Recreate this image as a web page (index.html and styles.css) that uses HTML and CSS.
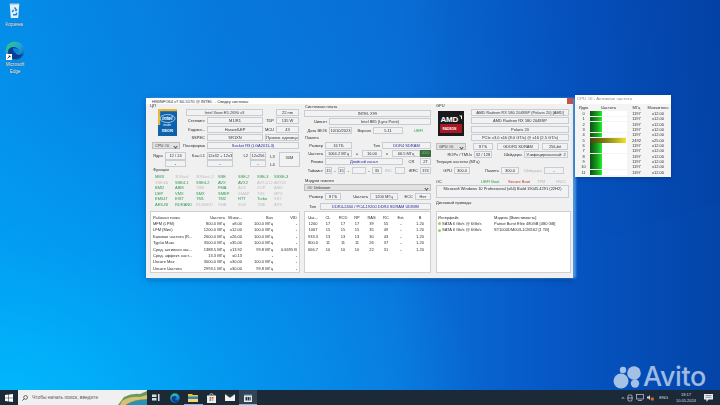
FILE: index.html
```html
<!DOCTYPE html>
<html lang="ru">
<head>
<meta charset="utf-8">
<title>HWiNFO64</title>
<link rel="stylesheet" href="styles.css">
</head>
<body>
<div class="desktop">
  <div class="dicon dicon-bin">
    <svg width="11" height="15" viewBox="0 0 11 15"><path d="M.8 2 L10.2 2 L9.2 15 L1.8 15 Z" fill="#e4eff8"/><path d="M.4 2 L10.6 2 L10 .5 L1 .5 Z" fill="#c4d2de"/><path d="M5.5 4.5 L7.5 7 L6.3 7.8 M3.2 9 L4.6 6.8 M4 11.8 L7.2 11.8 L7.8 9.8" fill="none" stroke="#1f7fd8" stroke-width="1.4"/></svg>
    <span>Корзина</span>
  </div>
  <div class="dicon dicon-edge">
    <svg width="20" height="20" viewBox="0 0 20 20"><defs><linearGradient id="eg" x1="0" y1="0" x2="1" y2="1"><stop offset="0" stop-color="#38d07a"/><stop offset=".55" stop-color="#1c9fd8"/><stop offset="1" stop-color="#0b4fa8"/></linearGradient></defs><circle cx="10" cy="10" r="9.5" fill="url(#eg)"/><path d="M3 11 C3 6 9 5 12 7 C15 9 13 12 10 11.5 C12 15 17 14 18 12 C17 17 12 19 8 18 C5 17 3 14 3 11 Z" fill="#0a3f94"/><path d="M8 7.5 C11 6.5 14 8 14 10 C14 12 11 12.5 10 11.5 C8.5 10.5 8 9 8 7.5 Z" fill="#0a84e0"/><rect x="1" y="13" width="6" height="6" fill="#fff"/><path d="M2.5 17.5 L5 15 M3.5 15 L5 15 L5 16.5" stroke="#123" stroke-width=".8" fill="none"/></svg>
    <span>Microsoft Edge</span>
  </div>

  <section class="win win-main">
    <header class="tb">HWiNFO64 v7.60-5170 @ INTEL  - Сводку системы<b class="close"></b></header>
    <div class="body">
      <div class="col col1">
        <div class="top">
          <div class="lb h4">ЦП</div>
          <div class="block mt1">
            <div class="logo-cpu">
              <svg width="19" height="27" viewBox="0 0 19 27"><rect width="19" height="27" fill="#0b62ad"/><path d="M0 0 H19 V2.2 H2.2 V16 H0 Z" fill="#e8b83a"/><ellipse cx="9.5" cy="9.5" rx="7.5" ry="4" fill="none" stroke="#fff" stroke-width=".6"/><text x="4" y="11" class="lg1">intel</text><text x="5" y="17" class="lg2">inside</text><text x="3.5" y="22.5" class="lg3">XEON</text></svg>
            </div>
            <div class="fields">
              <div class="row"><div class="f w77">Intel Xeon E5-2690 v3</div><div class="gap13"></div><div class="f w23">22 nm</div></div>
              <div class="row"><div class="lb r w21">Степпинг</div><div class="f w56">M1/R1</div><div class="lb r w13">TDP</div><div class="f w23">135 W</div></div>
              <div class="row"><div class="lb r w21">Кодово...</div><div class="f w56">Haswell-EP</div><div class="lb r w13">MCU</div><div class="f w23">43</div></div>
              <div class="row"><div class="lb r w21">SSPEC</div><div class="f w56">SR1XN</div><div class="gap2"></div><div class="f w34">Произв. единица</div></div>
            </div>
          </div>
          <div class="row mt1 ml2">
            <div class="combo w28">CPU #0</div>
            <div class="lb r w27">Платформа</div>
            <div class="f w92 blue">Socket R3 (LGA2011-3)</div>
          </div>
          <div class="row mt3 tall">
            <div class="lb w15 pl3">Ядра</div>
            <div class="stack w21"><div class="f">12 / 24</div><div class="f">-</div></div>
            <div class="lb r w21">Кэш L1</div>
            <div class="stack w26"><div class="f">12x32 + 12x32</div><div class="f">-</div></div>
            <div class="lb r w17">L2</div>
            <div class="stack w16"><div class="f">12x256</div><div class="f">-</div></div>
            <div class="stack2 w13"><span>L3</span><span>L4</span></div>
            <div class="stack w21"><div class="f full">30M</div></div>
          </div>
          <div class="lb h4 mt1 pl3 sec">Функции</div>
          <div class="feat">
            <i class="on">MMX</i><i>3DNow!</i><i>3DNow!-2</i><i class="on">SSE</i><i class="on">SSE-2</i><i class="on">SSE-3</i><i class="on">SSSE-3</i>
            <i>SSE4A</i><i class="on">SSE4.1</i><i class="on">SSE4.2</i><i class="on">AVX</i><i class="on">AVX2</i><i>AVX-512</i><i>AVX10</i>
            <i class="on">BMI2</i><i class="on">ABM</i><i>TBM</i><i class="on">FMA</i><i>ADX</i><i>XOP</i><i>AMX</i>
            <i class="on">DEP</i><i class="on">VMX</i><i class="on">SMX</i><i class="on">SMEP</i><i>SMAP</i><i>TSX</i><i>MPX</i>
            <i class="on">EM64T</i><i class="on">EIST</i><i class="on">TM1</i><i class="on">TM2</i><i class="on">HTT</i><i class="on">Turbo</i><i>SST</i>
            <i class="on">AES-NI</i><i class="on">RDRAND</i><i>RDSEED</i><i>SHA</i><i>SGX</i><i>TME</i><i>APX</i>
          </div>
        </div>
        <div class="list t1">
          <b>Рабочая точка</b><b class="e">Частота</b><b class="e">Множ...</b><b class="e">Bus</b><b class="e">VID</b>
          <span>MFM (LPM)</span><span class="e">800.0 МГц</span><span class="e">x8.00</span><span class="e">100.0 МГц</span><span class="e">-</span>
          <span>LFM (Мин)</span><span class="e">1200.0 МГц</span><span class="e">x12.00</span><span class="e">100.0 МГц</span><span class="e">-</span>
          <span>Базовая частота (R...</span><span class="e">2600.0 МГц</span><span class="e">x26.00</span><span class="e">100.0 МГц</span><span class="e">-</span>
          <span>Турбо Макс</span><span class="e">3500.0 МГц</span><span class="e">x35.00</span><span class="e">100.0 МГц</span><span class="e">-</span>
          <span>Сред. активная час...</span><span class="e">1388.5 МГц</span><span class="e">x13.92</span><span class="e">99.8 МГц</span><span class="e">0.6695 В</span>
          <span>Сред. эффект. част...</span><span class="e">13.3 МГц</span><span class="e">x0.13</span><span class="e">-</span><span class="e">-</span>
          <span>Uncore Max</span><span class="e">3000.0 МГц</span><span class="e">x30.00</span><span class="e">100.0 МГц</span><span class="e">-</span>
          <span>Uncore Частота</span><span class="e">2993.1 МГц</span><span class="e">x30.00</span><span class="e">99.8 МГц</span><span class="e">-</span>
        </div>
      </div>

      <div class="col col2">
        <div class="top">
          <div class="lb h4 mt1 pl1">Системная плата</div>
          <div class="f mt1 h7">INTEL X99</div>
          <div class="row mt1"><div class="lb r w25">Чипсет</div><div class="f grow">Intel B85 (Lynx Point)</div></div>
          <div class="row mt2"><div class="lb r w25">Дата BIOS</div><div class="f w23">10/10/2023</div><div class="lb r w21">Версия</div><div class="f w30">5.11</div><div class="lb uefi">UEFI</div></div>
          <div class="lb h4 mt2 pl1">Память</div>
          <div class="row mt2"><div class="lb r w21">Размер</div><div class="f w27">16 ГБ</div><div class="lb r w30">Тип</div><div class="f grow blue">DDR4 SDRAM</div></div>
          <div class="row mt1"><div class="lb r w21">Частота</div><div class="f w27">1064.2 МГц</div><div class="lb c w10">=</div><div class="f w20">16.00</div><div class="lb c w10">x</div><div class="f w28">66.5 МГц</div><div class="led">0000</div></div>
          <div class="row mt1"><div class="lb r w21">Режим</div><div class="f w78 blue">Двойной канал</div><div class="lb c w17">CR</div><div class="f grow">2T</div></div>
          <div class="row mt2"><div class="lb r w21">Тайминг</div><div class="f w7">15</div><div class="lb c w6">-</div><div class="f w7">15</div><div class="lb c w7">-</div><div class="f w14"></div><div class="lb c w6">-</div><div class="f w10">35</div><div class="lb c dim w13">tRC</div><div class="f w10"></div><div class="lb r w15">tRFC</div><div class="f grow">374</div></div>
          <div class="lb h4 mt5 pl1">Модули памяти</div>
          <div class="combo full-w mt1">#0: Unknown</div>
          <div class="row mt2"><div class="lb r w21">Размер</div><div class="f w16">8 ГБ</div><div class="lb r w29">Частота</div><div class="f w28">1200 МГц</div><div class="lb r w17">ECC</div><div class="f grow">Нет</div></div>
          <div class="row mt3"><div class="lb r w14">Тип</div><div class="gap2"></div><div class="f grow blue">DDR4-2400 / PC4-19200 DDR4 SDRAM UDIMM</div></div>
        </div>
        <div class="list t2">
          <b>Час...</b><b>CL</b><b>RCD</b><b>RP</b><b>RAS</b><b>RC</b><b>Ext.</b><b>В</b>
          <span>1200</span><span>17</span><span>17</span><span>17</span><span>39</span><span>55</span><span>-</span><span>1.20</span>
          <span>1067</span><span>15</span><span>15</span><span>15</span><span>35</span><span>49</span><span>-</span><span>1.20</span>
          <span>933.3</span><span>13</span><span>13</span><span>13</span><span>30</span><span>43</span><span>-</span><span>1.20</span>
          <span>800.0</span><span>11</span><span>11</span><span>11</span><span>26</span><span>37</span><span>-</span><span>1.20</span>
          <span>666.7</span><span>10</span><span>10</span><span>10</span><span>22</span><span>31</span><span>-</span><span>1.20</span>
        </div>
      </div>

      <div class="col col3">
        <div class="top">
          <div class="lb h4">GPU</div>
          <div class="block mt1">
            <div class="logo-gpu">
              <svg width="26" height="25" viewBox="0 0 26 25"><rect width="26" height="25" fill="#1a1a1c"/><text x="2.5" y="10.5" class="am">AMD</text><path d="M21 4.5 H24 V8.5 L23 7.5 V5.5 H22 Z" fill="#fff"/><rect x="2" y="13" width="22" height="9" fill="#a81826"/><text x="4.5" y="18.5" class="rad">RADEON</text></svg>
            </div>
            <div class="fields g">
              <div class="f">AMD Radeon RX 580 2048SP (Polaris 20) [AMD]</div>
              <div class="f">AMD Radeon RX 580 2048SP</div>
              <div class="f">Polaris 20</div>
              <div class="f">PCIe v3.0 x16 (8.0 GT/s) @ x16 (2.5 GT/s)</div>
            </div>
          </div>
          <div class="row mt2">
            <div class="combo w30">GPU #0</div><div class="gap7"></div><div class="f w20">8 ГБ</div><div class="gap4"></div><div class="f w42">GDDR5 SDRAM</div><div class="gap3"></div><div class="f w26">256-bit</div>
          </div>
          <div class="row mt1"><div class="lb r w38">ROPs / TMUs</div><div class="f w18">32 / 128</div><div class="lb r w32">Шейдеры</div><div class="f w44">Унифицированный: 2</div></div>
          <div class="lb h4 mt2 sec">Текущие частоты (МГц)</div>
          <div class="row mt3"><div class="lb r w18">GPU</div><div class="f w16">300.0</div><div class="lb r w31">Память</div><div class="f w18">300.0</div><div class="lb r dim w25">Шейдеры</div><div class="f w20">-</div></div>
          <div class="bootrow mt6">
            <span>OC</span><span class="grn">UEFI Boot</span><span class="red">Secure Boot</span><span class="dim">TPM</span><span class="dim">HVCI</span>
          </div>
          <div class="osbox">Microsoft Windows 10 Professional (x64) Build 19045.4291 (22H2)</div>
          <div class="lb h4 mt3">Дисковый приводы</div>
        </div>
        <div class="list t3">
          <b>Интерфейс</b><b>Модель [Вместимость]</b>
          <span><em class="dot"></em>SATA 6 Gb/s @ 6Gb/s</span><span>Patriot Burst Elite 480GB [480 GB]</span>
          <span><em class="dot"></em>SATA 6 Gb/s @ 6Gb/s</span><span>ST1000DM003-1CM162 [1 TB]</span>
        </div>
      </div>
    </div>
  </section>

  <section class="win win-cpu">
    <header class="tb2">CPU #0 - Активная частота</header>
    <div class="cpu-list">
      <b>Ядро</b><b>Частота</b><b>МГц</b><b>Множитель</b>
      <span>0</span><div class="bar"><u></u></div><span>1197</span><span>x12.00</span>
      <span>1</span><div class="bar"><u></u></div><span>1197</span><span>x12.00</span>
      <span>2</span><div class="bar"><u></u></div><span>1197</span><span>x12.00</span>
      <span>3</span><div class="bar"><u></u></div><span>1197</span><span>x12.00</span>
      <span>4</span><div class="bar"><u></u></div><span>1197</span><span>x12.00</span>
      <span>5</span><div class="bar hot"><u></u></div><span>2492</span><span>x25.00</span>
      <span>6</span><div class="bar"><u></u></div><span>1197</span><span>x12.00</span>
      <span>7</span><div class="bar"><u></u></div><span>1197</span><span>x12.00</span>
      <span>8</span><div class="bar"><u></u></div><span>1197</span><span>x12.00</span>
      <span>9</span><div class="bar"><u></u></div><span>1197</span><span>x12.00</span>
      <span>10</span><div class="bar"><u></u></div><span>1197</span><span>x12.00</span>
      <span>11</span><div class="bar"><u></u></div><span>1197</span><span>x12.00</span>
    </div>
  </section>

  <div class="avito">
    <svg width="28" height="24" viewBox="0 0 28 24"><circle cx="21" cy="8" r="6.8"/><circle cx="10" cy="5" r="3.2"/><circle cx="8" cy="16" r="7.5"/><circle cx="22" cy="18.5" r="4.2"/></svg>
    <span>Avito</span>
  </div>

  <footer class="taskbar">
    <div class="start"><svg width="8" height="8" viewBox="0 0 8 8"><path d="M0 1 L3.5 .5 V3.7 H0 Z M4 .4 L8 0 V3.7 H4 Z M0 4.2 H3.5 V7.5 L0 7 Z M4 4.2 H8 V8 L4 7.6 Z" fill="#fff"/></svg></div>
    <div class="search">
      <svg class="sico" width="6" height="6" viewBox="0 0 6 6"><circle cx="3.6" cy="2.4" r="1.9" fill="none" stroke="#333" stroke-width=".7"/><path d="M2.2 3.8 L.4 5.6" stroke="#333" stroke-width=".8"/></svg>
      <span class="stext">Чтобы начать поиск, введите</span>
      <svg class="scene" width="29" height="15" viewBox="0 0 29 15"><rect width="29" height="15" fill="#f0f0f0"/><path d="M0 15 L6 7 Q14 3 22 4 L29 1 V15 Z" fill="#6a9a5a"/><path d="M4 11 Q12 6 22 7 L29 5 V9 Q16 9 7 15 H2 Z" fill="#d8c078"/><path d="M8 15 Q16 10 29 10 V15 Z" fill="#2a90b8"/></svg>
    </div>
    <div class="tk"><svg width="8" height="7" viewBox="0 0 8 7"><path d="M0 .5 H4.5 V3 H0 Z M0 4 H4.5 V6.5 H0 Z M6 0 H7.5 V7 H6 Z" fill="#d8dde2"/></svg></div>
    <div class="tk"><svg width="10" height="10" viewBox="0 0 20 20"><circle cx="10" cy="10" r="9.5" fill="url(#eg)"/><path d="M3 11 C3 6 9 5 12 7 C15 9 13 12 10 11.5 C12 15 17 14 18 12 C17 17 12 19 8 18 C5 17 3 14 3 11 Z" fill="#0a3f94"/></svg></div>
    <div class="tk act"><svg width="10" height="8" viewBox="0 0 10 8"><path d="M0 0 H4 L5 1 H10 V8 H0 Z" fill="#f2c230"/><rect y="2.5" width="10" height="2.5" fill="#2d86c8"/><rect y="5" width="10" height="3" fill="#f6d768"/></svg></div>
    <div class="tk"><svg width="9" height="10" viewBox="0 0 9 10"><path d="M0 2.5 H9 V10 H0 Z" fill="#e8eef2"/><path d="M2.8 2.5 C2.8 0 6.2 0 6.2 2.5" fill="none" stroke="#e8eef2" stroke-width=".8"/><path d="M2.5 4 H4.2 V5.7 H2.5 Z M4.8 4 H6.5 V5.7 H4.8 Z" fill="#e06030"/><path d="M2.5 6.2 H4.2 V7.9 H2.5 Z" fill="#2d8ad8"/><path d="M4.8 6.2 H6.5 V7.9 H4.8 Z" fill="#f0b020"/></svg></div>
    <div class="tk"><svg width="10" height="7" viewBox="0 0 10 7"><rect width="10" height="7" fill="#f0f2f4"/><path d="M0 0 L5 3.6 L10 0" fill="#20303c" stroke="#20303c" stroke-width=".4"/></svg></div>
    <div class="tk run"><svg width="8" height="8" viewBox="0 0 8 8"><rect width="8" height="8" fill="#e8ecf0"/><rect y="0" width="8" height="1.5" fill="#3c6ea0"/><path d="M1.5 3 H3 V6.5 H1.5 Z M3.5 3 H5 V6.5 H3.5 Z M5.5 3 H6.7 V6.5 H5.5 Z" fill="#28323c"/></svg></div>
    <div class="tray">
      <span class="ti">^</span>
      <svg width="6" height="8" viewBox="0 0 6 8"><rect x="1" y="1" width="4" height="6" rx="1" fill="none" stroke="#ccd" stroke-width=".7"/><path d="M0 4 H6" stroke="#ccd" stroke-width=".7"/></svg>
      <svg width="8" height="7" viewBox="0 0 8 7"><rect x=".5" y=".5" width="7" height="4.5" fill="none" stroke="#ccd" stroke-width=".7"/><path d="M2 6.5 H6" stroke="#ccd" stroke-width=".7"/></svg>
      <svg width="7" height="7" viewBox="0 0 7 7"><path d="M0 2.5 H1.5 L3 1 V6 L1.5 4.5 H0 Z" fill="#ccd"/><rect x="3.8" y="3.5" width="3" height="3" fill="#e06820"/></svg>
      <span class="lang">ENG</span>
      <div class="clock"><span>18:17</span><span>10.05.2024</span></div>
      <svg class="note" width="9" height="8" viewBox="0 0 9 8"><path d="M0 0 H9 V5.5 H4.5 L2.5 8 V5.5 H0 Z" fill="#e8ecf0"/><path d="M1.5 1.5 H7.5 M1.5 3.3 H7.5" stroke="#506070" stroke-width=".6"/></svg>
    </div>
  </footer>
</div>
</body>
</html>
```
FILE: styles.css
```css
* { box-sizing: border-box; margin: 0; padding: 0; }
html, body { width: 720px; height: 405px; overflow: hidden; }
body { font-family: "Liberation Sans", Arial, sans-serif; background: #0a78dc; }

.desktop {
  position: relative; width: 720px; height: 405px; overflow: hidden;
  background:
    radial-gradient(480px 300px at 0 100%, rgba(0,190,255,.9), rgba(0,170,250,.5) 55%, rgba(0,150,240,0) 100%),
    linear-gradient(96deg, rgba(0,160,244,.6) 0, rgba(0,140,236,.3) 30%, rgba(0,130,232,0) 60%),
    linear-gradient(90deg, #0a7ce0 0, #0a72da 55%, #0656c4 78%, #0344a8 100%);
}
.desktop::before {
  content: ""; position: absolute; inset: 0;
  background: linear-gradient(200deg, rgba(0,40,140,.25), rgba(0,60,170,0) 55%);
  clip-path: polygon(0 0, 100% 0, 100% 50%, 62% 72%, 40% 100%, 0 100%);
  opacity: .5;
}

/* desktop icons */
.dicon { position: absolute; width: 30px; display: flex; flex-direction: column; align-items: center; color: #fff; font-size: 4.6px; line-height: 6.5px; text-align: center; text-shadow: 0 0 1px #013; }
.dicon-bin { left: -1px; top: 3px; gap: 4px; }
.dicon-edge { left: 0; top: 41px; gap: 1px; }

/* main window */
.win { position: absolute; background: #f0f0f0; color: #2e2e2e; filter: blur(.25px); }
.win-main { left: 146px; top: 98px; width: 427px; height: 180px; box-shadow: 3px 0 2px rgba(120,200,250,.6), 0 2px 6px rgba(0,40,90,.35); }
.tb { height: 6px; font-size: 4.1px; line-height: 5px; padding: 1px 0 0 6px; background: #fff; white-space: pre; position: relative; }
.close { position: absolute; right: 0; top: 0; width: 6px; height: 6px; background: #c75050; }
.body { display: grid; grid-template-columns: 150px 128px 134px; column-gap: 4px; padding-left: 4px; font-size: 4px; line-height: 7px; }
.body > .col2 { margin-right: 1px; }
.col { display: flex; flex-direction: column; min-width: 0; }
.top { height: 106px; display: flex; flex-direction: column; flex: none; }
.block { display: flex; height: 32px; flex: none; }
.logo-cpu { width: 36px; padding-left: 8px; flex: none; }
.logo-gpu { width: 35px; padding: 2px 0 0 2px; flex: none; }
.lg1 { font: italic 700 5px "Liberation Sans", sans-serif; fill: #fff; }
.lg2 { font: 400 3px "Liberation Sans", sans-serif; fill: #fff; }
.lg3 { font: 700 4px "Liberation Sans", sans-serif; fill: #fff; }
.am { font: 700 8px "Liberation Sans", sans-serif; fill: #fff; letter-spacing: -.2px; }
.rad { font: 700 3.2px "Liberation Sans", sans-serif; fill: #fff; }
.fields { flex: 1; display: flex; flex-direction: column; justify-content: space-between; }
.fields.g { margin-right: 1px; }
.row { display: flex; height: 7px; flex: none; }
.row.tall { height: 15px; }
.lb { white-space: nowrap; flex: none; }
.h4 { height: 4px; line-height: 4px; }
.h7 { height: 7px; flex: none; }
.r { text-align: right; padding-right: 2px; }
.c { text-align: center; }
.f { height: 7px; line-height: 6px; background: #f1f2f4; border: 1px solid #c9cdd1; text-align: center; white-space: nowrap; overflow: hidden; color: #333; flex: none; }
.f.grow { flex: 1; }
.blue { color: #2a2a9a; }
.dim { color: #b4b4b4; }
.combo { height: 7px; line-height: 6px; background: #e2e2e2; border: 1px solid #bdbdbd; padding-left: 2px; position: relative; flex: none; white-space: nowrap; }
.combo::after { content: ""; position: absolute; right: 2px; top: 2px; width: 2px; height: 2px; border-right: .6px solid #555; border-bottom: .6px solid #555; transform: rotate(45deg); }
.full-w { width: 127px; }
.stack { display: flex; flex-direction: column; flex: none; }
.stack .f { height: 7.5px; }
.stack .f.full { height: 15px; line-height: 9px; }
.stack2 { display: flex; flex-direction: column; align-items: center; line-height: 8px; flex: none; padding-top: 1px; }
.uefi { color: #2aa050; padding-left: 11px; }
.led { width: 11px; height: 7px; line-height: 7px; background: #3c6e3c; color: #7fbf7f; text-align: center; flex: none; font-size: 3.4px; }
.sec { margin-top: 3px; }

.w6 { width: 6px; } .w7 { width: 7px; } .w10 { width: 10px; } .w13 { width: 13px; } .w14 { width: 14px; } .w15 { width: 15px; } .w16 { width: 16px; } .w17 { width: 17px; } .w18 { width: 18px; } .w20 { width: 20px; } .w21 { width: 21px; } .w23 { width: 23px; } .w25 { width: 25px; } .w26 { width: 26px; } .w27 { width: 27px; } .w28 { width: 28px; } .w29 { width: 29px; } .w30 { width: 30px; } .w31 { width: 31px; } .w32 { width: 32px; } .w34 { width: 34px; } .w38 { width: 38px; } .w42 { width: 42px; } .w44 { width: 44px; } .w56 { width: 56px; } .w77 { width: 77px; } .w78 { width: 78px; } .w92 { width: 92px; }
.gap2 { width: 2px; flex: none; } .gap3 { width: 3px; flex: none; } .gap4 { width: 4px; flex: none; } .gap7 { width: 7px; flex: none; } .gap13 { width: 13px; flex: none; }
.mt1 { margin-top: 1px; } .mt2 { margin-top: 2px; } .mt3 { margin-top: 3px; } .mt5 { margin-top: 5px; } .mt6 { margin-top: 6px; }
.ml2 { margin-left: 2px; } .pl1 { padding-left: 1px; } .pl3 { padding-left: 3px; }

.feat { display: grid; grid-template-columns: 20px 21px 22px 20px 19px 17px 1fr; grid-auto-rows: 5.6px; margin: 2px 0 0 5px; line-height: 5.6px; }
.feat i { font-style: normal; color: #c0c0c0; white-space: nowrap; }
.feat i.on { color: #2f9a52; }

/* lists */
.list { margin-top: 1px; height: 62px; background: #fff; border: 1px solid #d0d0d0; display: grid; grid-template-rows: 7px; grid-auto-rows: 6.4px; line-height: 6.4px; padding-top: 2px; align-content: start; }
.list b { font-weight: 400; line-height: 7px; }
.list span, .list b { white-space: nowrap; overflow: hidden; }
.e { text-align: right; }
.t1 { grid-template-columns: 47px 25px 17px 31px 24px; padding-left: 2px; }
.t2 { grid-template-columns: 14px 16px 14px 14px 15px 14px 16px 22px; padding-left: 1px; text-align: center; }
.t3 { grid-template-columns: 56px 1fr; padding-left: 1px; margin-right: -1px; }
.dot { display: inline-block; width: 3px; height: 3px; border-radius: 50%; background: #9ad060; margin-right: 1px; vertical-align: -0.3px; }

.bootrow { display: grid; grid-template-columns: 45px 27px 29px 19px 1fr; height: 4px; line-height: 4px; flex: none; }
.grn { color: #2aa050; } .red { color: #c03030; }
.osbox { flex: none; height: 13px; margin: 1px 1px 0 0; background: #f1f2f4; border: 1px solid #c9cdd1; text-align: center; line-height: 5px; white-space: nowrap; }

/* small cpu window */
.win-cpu { left: 575px; top: 95px; width: 96px; height: 82px; background: #f4f4f4; box-shadow: 0 1px 4px rgba(0,40,90,.35); font-size: 4px; }
.tb2 { height: 9px; line-height: 8px; padding-left: 2px; color: #8c8c8c; font-size: 4.4px; background: #fff; }
.cpu-list { margin: 1px 1px 0 1px; display: grid; grid-template-columns: 13px 37px 1fr 24px; grid-template-rows: 6px; grid-auto-rows: 5.33px; line-height: 5.33px; text-align: center; padding-left: 1px; }
.cpu-list b { font-weight: 400; line-height: 6px; }
.bar { height: 4.9px; margin-top: .2px; background: #fff; display: flex; }
.bar u { display: block; width: 12px; background: linear-gradient(90deg, #0e4f12, #16a01e 60%, #22f02a); }
.bar.hot u { width: 36px; background: linear-gradient(90deg, #46420e, #8e8a18 50%, #ece426); }

/* avito */
.avito { position: absolute; left: 613px; top: 365px; display: flex; align-items: center; gap: 2px; color: #c0d4ee; opacity: .82; }
.avito svg { fill: #c8daf0; }
.avito span { font-family: Inter, "Liberation Sans", sans-serif; font-size: 27px; font-weight: 500; line-height: 24px; letter-spacing: -.4px; }

/* taskbar */
.taskbar { position: absolute; left: 0; right: 0; bottom: 0; height: 15px; background: #1b2a36; display: flex; align-items: center; }
.start { width: 18px; height: 15px; display: flex; align-items: center; justify-content: center; flex: none; }
.search { width: 129px; height: 15px; background: #f0f0f0; display: flex; align-items: center; position: relative; flex: none; }
.sico { margin-left: 4px; }
.stext { margin-left: 4px; font-size: 4.9px; color: #5a5a5a; white-space: nowrap; }
.scene { position: absolute; right: 0; top: 0; }
.tk { width: 18.5px; height: 15px; display: flex; align-items: center; justify-content: center; flex: none; }
.tk.act { box-shadow: inset 0 -1px 0 #7fb8e0; }
.tk.run { background: #33434f; box-shadow: inset 0 -1px 0 #7fb8e0; margin-left: -.5px; width: 18px; }
.tray { margin-left: auto; display: flex; align-items: center; gap: 3px; color: #d8dee4; font-size: 4px; padding-right: 7px; }
.ti { font-size: 6px; line-height: 6px; margin-top: 2px; }
.lang { margin-left: 2px; }
.clock { display: flex; flex-direction: column; align-items: center; width: 24px; margin: 0 3px; line-height: 6px; }
```
